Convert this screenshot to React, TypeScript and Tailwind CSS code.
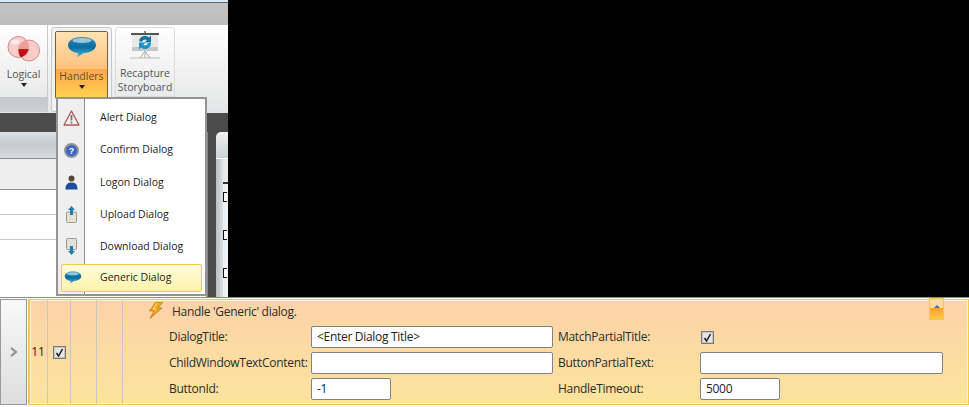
const font = { fontFamily: '"Open Sans", "Noto Sans", sans-serif' };

function Venn() {
  return (
    <svg width="34" height="28" viewBox="0 0 34 28" className="block">
      <defs>
        <clipPath id="lens">
          <circle cx="11.500" cy="12" r="10.500" />
        </clipPath>
        <linearGradient id="lensFill" x1="0" y1="0" x2="0" y2="1">
          <stop offset="0" stopColor="#f3a3a3" />
          <stop offset="0.42" stopColor="#f09a9a" />
          <stop offset="0.45" stopColor="#cc1014" />
          <stop offset="1" stopColor="#b00c10" />
        </linearGradient>
      </defs>
      <circle cx="11.500" cy="12" r="10.500" fill="#f9cdc9" stroke="#c88b89" />
      <circle cx="22" cy="15.500" r="10.500" fill="#f8c6c2" fillOpacity="0.9" stroke="#c88b89" />
      <circle cx="22" cy="15.500" r="10.500" fill="url(#lensFill)" clipPath="url(#lens)" />
      <ellipse cx="8" cy="7" rx="4" ry="2.500" fill="#ffffff" fillOpacity="0.6" />
    </svg>
  );
}

function Bubble({ w = 30, h = 22 }: { w?: number; h?: number }) {
  return (
    <svg width={w} height={h} viewBox="0 0 30 22" className="block">
      <defs>
        <linearGradient id="bub" x1="0" y1="0" x2="0" y2="1">
          <stop offset="0" stopColor="#2d8fbd" />
          <stop offset="0.5" stopColor="#0b6c9f" />
          <stop offset="0.8" stopColor="#2b9ccb" />
          <stop offset="1" stopColor="#74c6e6" />
        </linearGradient>
      </defs>
      <path d="M15 1C7 1 1 4.500 1 9C1 13.500 6 16.500 11 17L10 21.500L17 17C24 16.500 29 13.500 29 9C29 4.500 23 1 15 1Z" fill="url(#bub)" />
      <ellipse cx="15" cy="4.500" rx="9.500" ry="2.500" fill="#ffffff" fillOpacity="0.55" />
    </svg>
  );
}

function Board() {
  return (
    <svg width="30" height="30" viewBox="0 0 30 30" className="block">
      <path d="M15 0V3" stroke="#888" strokeWidth="2" />
      <rect x="1" y="2" width="28" height="2" fill="#555" />
      <rect x="2" y="4" width="26" height="16" fill="#e9e9e9" />
      <rect x="2" y="16" width="26" height="4" fill="#c6c6c6" />
      <path d="M15 20L10 27M15 20L20 27M15 20V27" stroke="#aaa" />
      <path d="M0 27H30" stroke="#bbb" />
      <path d="M9 10A6 6 0 0 1 19 6.500L21 4.500V11.500H14.500L16.800 9.200A3 3 0 0 0 12 11Z" fill="#0f75a8" />
      <path d="M21 12A6 6 0 0 1 11 16.500L9 18.500V11.500H15.500L13.200 13.800A3 3 0 0 0 18 12Z" fill="#1a93c6" />
    </svg>
  );
}

function AlertIcon() {
  return (
    <svg width="17" height="16" viewBox="0 0 17 16" className="block">
      <path d="M8.500 1L16 15H1Z" fill="#f7eeee" stroke="#a85a5a" strokeWidth="1.300" strokeLinejoin="round" />
      <path d="M8.500 5V10.500" stroke="#777" strokeWidth="1.800" />
      <circle cx="8.500" cy="12.500" r="1" fill="#777" />
    </svg>
  );
}

function ConfirmIcon() {
  return (
    <svg width="15" height="15" viewBox="0 0 15 15" className="block">
      <circle cx="7.500" cy="7.500" r="6.500" fill="#3a66c4" stroke="#8f939b" strokeWidth="2" />
      <text x="7.500" y="11" textAnchor="middle" fontSize="9" fontWeight="700" fill="#fff" fontFamily="Liberation Sans">?</text>
    </svg>
  );
}

function LogonIcon() {
  return (
    <svg width="13" height="15" viewBox="0 0 13 15" className="block">
      <circle cx="6.500" cy="3.500" r="3" fill="#5b4636" />
      <path d="M0.500 14.500C0.500 9 3 7.500 6.500 7.500C10 7.500 12.500 9 12.500 14.500Z" fill="#1d4f9a" />
    </svg>
  );
}

function UploadIcon() {
  return (
    <svg width="11" height="17" viewBox="0 0 11 17" className="block">
      <rect x="0.500" y="6" width="10" height="10.500" rx="1" fill="#e6e2d2" stroke="#9a9a90" />
      <path d="M5.500 0L9 4H7V9H4V4H2Z" fill="#1880b4" />
    </svg>
  );
}

function DownloadIcon() {
  return (
    <svg width="11" height="18" viewBox="0 0 11 18" className="block">
      <rect x="0.500" y="0.500" width="10" height="11" rx="1" fill="#e0e0da" stroke="#9a9a90" />
      <path d="M5.500 17L9 13H7V8H4V13H2Z" fill="#1880b4" />
    </svg>
  );
}

function Bolt() {
  return (
    <svg width="16" height="17" viewBox="0 0 16 17" className="block">
      <path d="M8 0H15L10 6H14L2 16.500L6 9H1.500Z" fill="#f3a81c" stroke="#b5671a" strokeWidth="0.700" />
      <path d="M9 1L5 7H8" stroke="#ffe680" fill="none" />
    </svg>
  );
}

function Check() {
  return (
    <div className="flex h-[13px] w-[13px] items-center justify-center border border-[#77797c] bg-[#c4c4c4] p-px">
      <div className="flex h-full w-full items-center justify-center bg-[#e6e6e6]">
        <svg width="9" height="9" viewBox="0 0 9 9" className="block">
          <path d="M1.500 5L3.500 8L7.500 1" stroke="#1b1b1b" strokeWidth="1.500" fill="none" />
        </svg>
      </div>
    </div>
  );
}

function Field({ value = "", width }: { value?: string; width: string }) {
  return (
    <div className={`flex h-[22px] items-center rounded-[2px] border border-[#7f8287] bg-white pl-[5px] text-[#222] ${width}`}>
      {value}
    </div>
  );
}

const items = [
  { label: "Alert Dialog", icon: <AlertIcon /> },
  { label: "Confirm Dialog", icon: <ConfirmIcon /> },
  { label: "Logon Dialog", icon: <LogonIcon /> },
  { label: "Upload Dialog", icon: <UploadIcon /> },
  { label: "Download Dialog", icon: <DownloadIcon /> },
];

function Menu() {
  return (
    <div className="absolute left-[56px] top-[97px] h-[199px] w-[151px] border-2 border-[#949494] bg-white">
      <div className="absolute bottom-0 left-0 top-0 w-[27px] border-r border-[#8d8d8d] bg-[#efefef]" />
      <div className="relative flex flex-col pt-[3px] text-[10.500px] text-[#1c1c1c]">
        {items.map((it) => (
          <div key={it.label} className="flex h-[32.200px] items-center">
            <div className="flex w-[27px] justify-center">{it.icon}</div>
            <span className="ml-[15px]">{it.label}</span>
          </div>
        ))}
        <div className="ml-[3px] mt-px flex h-[28px] w-[141px] items-center rounded-[2px] border border-[#f5c94e] bg-gradient-to-b from-[#fffbdc] to-[#fff3a8]">
          <div className="-ml-[1px] flex w-[24px] justify-center">
            <Bubble w={18} h={13} />
          </div>
          <span className="ml-[15px]">Generic Dialog</span>
        </div>
      </div>
    </div>
  );
}

function Ribbon() {
  return (
    <div className="relative flex h-[88px] bg-gradient-to-b from-white to-[#e4e5e6]">
      <div className="flex h-[88px] w-[48px] flex-col rounded-br-[2px] border-r border-[#c9c9c9]">
        <div className="flex h-[72px] flex-col items-center pt-[10px] text-[10.500px] text-[#555]">
          <div className="ml-[1px]"><Venn /></div>
          <span className="mt-[4px] leading-[14px]">Logical</span>
          <div className="mt-[2px] h-0 w-0 border-x-[3px] border-t-[4px] border-x-transparent border-t-[#222]" />
        </div>
        <div className="h-[15px] bg-gradient-to-b from-[#c5c7c8] to-[#cfd1d2]" />
      </div>
      <div className="ml-[3px] mt-[2px] h-[85px] w-[61px] rounded-[3px] border border-[#c8c8c8] bg-[#f1f1f1] p-[3px] pb-0">
        <div className="flex h-[68px] w-[53px] flex-col overflow-hidden rounded-[2px] border border-[#6c624a]">
          <div className="flex h-[37px] shrink-0 justify-center bg-gradient-to-b from-[#ffe2b2] to-[#ffc27c] pt-[4px]">
            <Bubble />
          </div>
          <div className="flex flex-1 flex-col items-center bg-gradient-to-b from-[#fda74b] to-[#ffd14f] text-[10.500px] text-[#5f4c33]">
            <span className="leading-[14px]">Handlers</span>
            <div className="mt-[2px] h-0 w-0 border-x-[3px] border-t-[4px] border-x-transparent border-t-[#222]" />
          </div>
        </div>
      </div>
      <div className="ml-[3px] mt-[2px] flex h-[70px] w-[60px] flex-col items-center rounded-t-[3px] border border-[#dcdcdc] pt-[3px] text-center text-[10.500px] leading-[14px] text-[#555]">
        <Board />
        <span className="mt-[5px]">Recapture</span>
        <span>Storyboard</span>
      </div>
    </div>
  );
}

function Workspace() {
  return (
    <div className="flex h-[184px] bg-[#4b4b4b] pt-[19px]" style={font}>
      <div className="flex w-[208px] flex-col border-r-2 border-[#8a8a8a]">
        <div className="h-[27px] shrink-0 border-b border-[#8a8f92] bg-gradient-to-b from-[#d9dfe2] via-[#c5cbce] to-[#d6dbdd]" />
        <div className="h-[31px] shrink-0 border-b border-[#8a8a8a] bg-[#eeeeee]" />
        <div className="h-[25px] shrink-0 border-b border-[#cccccc] bg-white" />
        <div className="h-[25px] shrink-0 border-b border-[#cccccc] bg-white" />
        <div className="flex-1 bg-white" />
      </div>
      <div className="ml-[8px] flex flex-1 flex-col overflow-hidden rounded-tl-[5px]">
        <div className="h-[27px] shrink-0 border-b border-white bg-gradient-to-b from-[#f0f1f1] to-[#cdd2d5]" />
        <div className="flex flex-1">
          <div className="w-[7px] bg-gradient-to-r from-[#b9bdc0] to-[#dde0e2]" />
          <div className="flex-1 bg-[#eef1f6]">
            <div className="h-[25px] border-b-2 border-[#333] bg-[#e8e8e8]" />
            <div className="flex flex-col gap-[28px] pt-[8px]">
              <div className="h-[10px] w-[4px] border border-r-0 border-[#111] bg-white" />
              <div className="h-[10px] w-[4px] border border-r-0 border-[#111] bg-white" />
              <div className="h-[10px] w-[4px] border border-r-0 border-[#111] bg-white" />
            </div>
          </div>
        </div>
      </div>
    </div>
  );
}

export default function App() {
  return (
    <div className="relative h-[407px] w-[969px] overflow-hidden bg-[#c9c9c9]" style={font}>
      <div className="flex h-[297px]">
        <div className="w-[228px]">
          <div className="h-[2px] bg-[#dbe8f2]" />
          <div className="h-[23px] border-t border-[#5b6770] bg-gradient-to-b from-[#c3c3c3] to-[#bcbcbc]" />
          <Ribbon />
          <Workspace />
        </div>
        <div className="flex-1 bg-black" />
      </div>

      <Menu />

      <div className="flex h-[110px] border-t border-[#8a8a8a] bg-white pb-[2px] pt-px">
        <div className="flex w-[27px] shrink-0 items-center justify-center border border-[#9a9a9a] bg-gradient-to-b from-[#f8f8f8] to-[#dedede]">
          <svg width="8" height="10" viewBox="0 0 8 10" className="block">
            <path d="M1 1L6 5L1 9" stroke="#8d8d8d" strokeWidth="2" fill="none" />
          </svg>
        </div>
        <div className="ml-px flex flex-1 border border-l-[2px] border-[#f4c64a] bg-gradient-to-b from-[#fdd2a8] to-[#fbe49c] shadow-[inset_0_0_0_1px_#fff5d0]">
          <div className="flex w-[18px] shrink-0 items-center justify-center border-r border-[#c8c8c8] pr-px text-[12px] text-[#222]">11</div>
          <div className="flex w-[23px] shrink-0 items-center justify-center border-r border-[#c8c8c8] pl-px">
            <Check />
          </div>
          <div className="w-[26px] shrink-0 border-r border-[#c8c8c8]" />
          <div className="w-[26px] shrink-0 border-r border-[#c8c8c8]" />
          <div className="relative flex-1 pl-[46px] pt-[2px] text-[12px] tracking-[-0.3px] text-[#2c2c2c]">
            <div className="flex h-[24px] items-start">
              <div className="-ml-[21px]"><Bolt /></div>
              <span className="ml-[8px] mt-[1px]">Handle 'Generic' dialog.</span>
            </div>
            <div className="grid grid-cols-[142px_247px_142px_243px] items-center gap-y-[4px]">
              <span>DialogTitle:</span>
              <Field value="<Enter Dialog Title>" width="w-[242px]" />
              <span>MatchPartialTitle:</span>
              <div className="pl-[1px]"><Check /></div>
              <span>ChildWindowTextContent:</span>
              <Field width="w-[242px]" />
              <span>ButtonPartialText:</span>
              <Field width="w-[243px]" />
              <span>ButtonId:</span>
              <Field value="-1" width="w-[80px]" />
              <span>HandleTimeout:</span>
              <Field value="5000" width="w-[80px]" />
            </div>
            <div className="absolute right-[24px] top-[-2px] flex h-[22px] w-[15px] flex-col border border-[#f7c83f]">
              <div className="flex h-[9px] items-end justify-center bg-[#fdd8ab]">
                <div className="h-0 w-0 border-x-[3px] border-b-[3px] border-x-transparent border-b-[#3e6fb5]" />
              </div>
              <div className="flex-1 bg-gradient-to-b from-[#fb9f2e] to-[#fdc94e]" />
            </div>
          </div>
        </div>
      </div>
    </div>
  );
}
